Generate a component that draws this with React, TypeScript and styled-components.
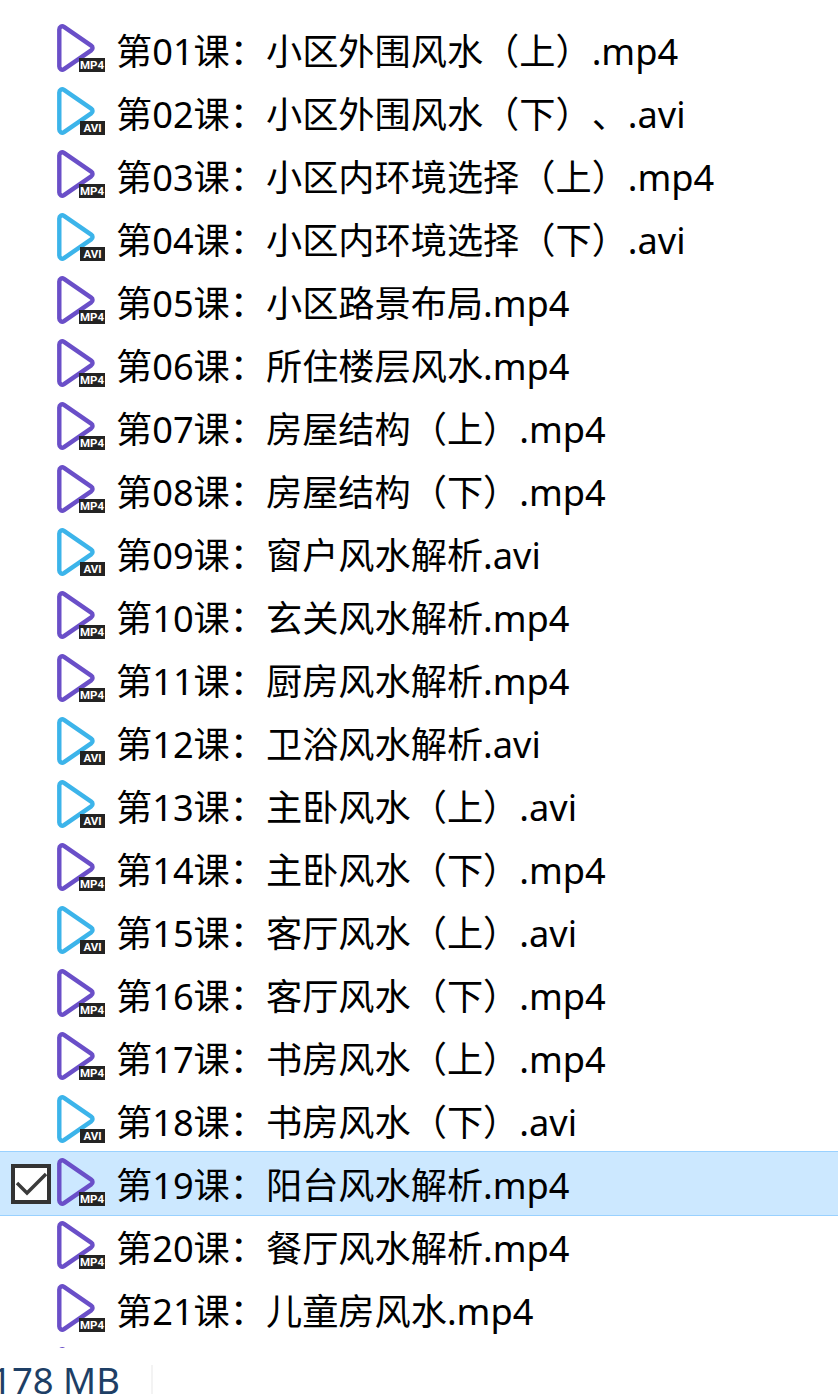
import React from "react";
import styled, { createGlobalStyle } from "styled-components";

const files = [
  "第01课：小区外围风水（上）.mp4",
  "第02课：小区外围风水（下）、.avi",
  "第03课：小区内环境选择（上）.mp4",
  "第04课：小区内环境选择（下）.avi",
  "第05课：小区路景布局.mp4",
  "第06课：所住楼层风水.mp4",
  "第07课：房屋结构（上）.mp4",
  "第08课：房屋结构（下）.mp4",
  "第09课：窗户风水解析.avi",
  "第10课：玄关风水解析.mp4",
  "第11课：厨房风水解析.mp4",
  "第12课：卫浴风水解析.avi",
  "第13课：主卧风水（上）.avi",
  "第14课：主卧风水（下）.mp4",
  "第15课：客厅风水（上）.avi",
  "第16课：客厅风水（下）.mp4",
  "第17课：书房风水（上）.mp4",
  "第18课：书房风水（下）.avi",
  "第19课：阳台风水解析.mp4",
  "第20课：餐厅风水解析.mp4",
  "第21课：儿童房风水.mp4",
  "第22课：卧室风水.mp4",
];

const SELECTED = 18;

const GlobalStyle = createGlobalStyle`
  html, body {
    margin: 0;
    padding: 0;
    background: #ffffff;
    overflow: hidden;
  }
`;

const Page = styled.div`
  width: 838px;
  height: 1394px;
  display: flex;
  flex-direction: column;
  overflow: hidden;
  font-family: "Noto Sans", "Noto Sans CJK SC", sans-serif;
`;

const List = styled.ul`
  height: 1348px;
  flex: none;
  margin: 0;
  padding: 18px 0 0;
  box-sizing: border-box;
  list-style: none;
  overflow: hidden;
`;

const Row = styled.li<{ $selected?: boolean }>`
  position: relative;
  height: 63px;
  display: flex;
  align-items: flex-start;
  gap: 11px;
  padding-left: 57px;
  background: ${(p) => (p.$selected ? "#cce8ff" : "transparent")};
  box-shadow: ${(p) => (p.$selected ? "0 0 0 1px #99d1ff" : "none")};
`;

const Check = styled.span`
  position: absolute;
  left: 11px;
  top: 12px;
  width: 40px;
  height: 40px;
  box-sizing: border-box;
  border: 4px solid #333333;
  background: #ffffff;
  display: flex;
  align-items: center;
  justify-content: center;
`;

const Icon = styled.span`
  position: relative;
  flex: none;
  width: 48px;
  height: 48px;
  margin-top: 6px;
`;

const Badge = styled.span<{ $wide?: boolean }>`
  position: absolute;
  right: 0;
  bottom: 0;
  width: ${(p) => (p.$wide ? "26px" : "25px")};
  height: 14px;
  text-align: center;
  background: #232323;
  color: #ffffff;
  font: 700 11.5px/14px "Roboto", "Liberation Sans", sans-serif;
`;

const Name = styled.span`
  color: #000000;
  font-size: 36.2px;
  line-height: 63px;
  margin-top: 2px;
  white-space: nowrap;
  text-spacing-trim: space-all;
`;

const Status = styled.div`
  flex: 1;
  display: flex;
  align-items: flex-end;
`;

const Size = styled.div`
  width: 151px;
  height: 29px;
  flex: none;
  border-right: 2px solid #f3f3f3;
  overflow: hidden;
  color: #1e3f66;
  font-size: 36.5px;
  line-height: 30px;
  text-indent: -9px;
  white-space: nowrap;
`;

const PlayIcon = ({ ext }: { ext: string }) => (
  <Icon>
    <svg width="48" height="48" viewBox="0 0 48 48" fill="none">
      <path
        d="M2.3 5.5 C2.3 3 4.8 1.5 7 2.9 L34.2 21.6 C36 22.8 36 25.2 34.2 26.4 L7 45.1 C4.8 46.5 2.3 45 2.3 42.5 Z"
        stroke={ext === "mp4" ? "#6a4fc8" : "#3cb4ea"}
        strokeWidth="4.4"
        strokeLinejoin="round"
      />
    </svg>
    <Badge $wide={ext === "mp4"}>{ext.toUpperCase()}</Badge>
  </Icon>
);

const App = () => {
  return (
    <Page>
      <GlobalStyle />
      <List>
        {files.map((name, i) => (
          <Row key={name} $selected={i === SELECTED}>
            {i === SELECTED && (
              <Check>
                <svg width="32" height="32" viewBox="0 0 32 32" fill="none">
                  <path d="M2 15 L12 25 L31 6" stroke="#3b3b3b" strokeWidth="3.4" />
                </svg>
              </Check>
            )}
            <PlayIcon ext={name.endsWith("mp4") ? "mp4" : "avi"} />
            <Name>{name}</Name>
          </Row>
        ))}
      </List>
      <Status>
        <Size>178 MB</Size>
      </Status>
    </Page>
  );
};

export default App;
